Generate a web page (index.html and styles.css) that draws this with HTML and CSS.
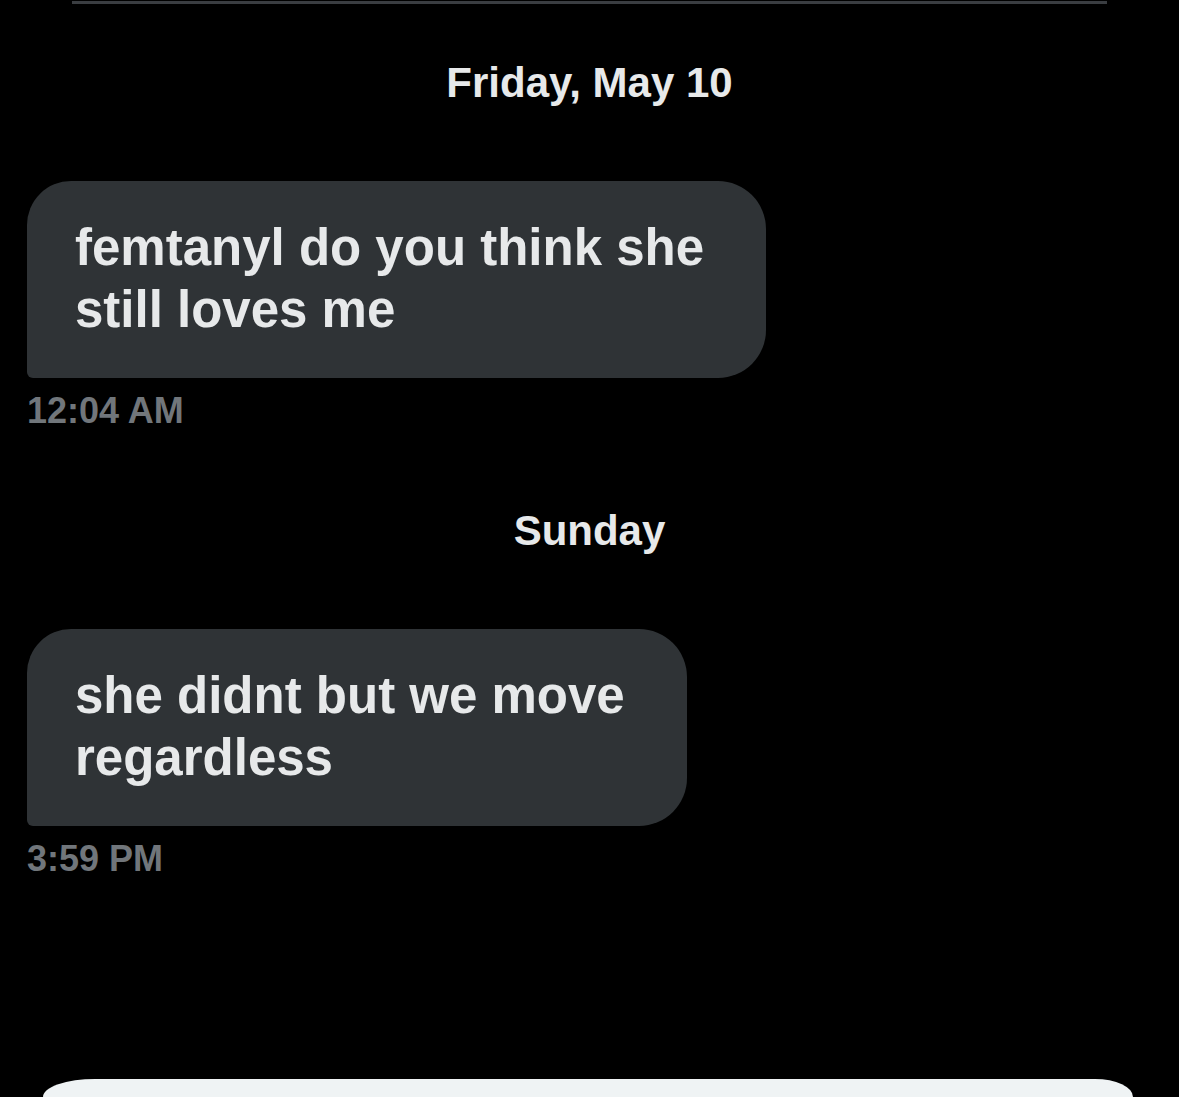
FILE: index.html
```html
<!DOCTYPE html>
<html lang="en">
<head>
    <meta charset="UTF-8">
    <meta name="viewport" content="width=device-width, initial-scale=1.0">
    <title>Messages</title>
    <link rel="stylesheet" href="styles.css">
</head>
<body>
    <div class="top-rule"></div>
    <main class="thread">
        <div class="day">Friday, May 10</div>
        <div class="message">
            <div class="bubble">femtanyl do you think she<br>still loves me</div>
            <div class="time">12:04 AM</div>
        </div>

        <div class="day">Sunday</div>
        <div class="message">
            <div class="bubble">she didnt but we move<br>regardless</div>
            <div class="time">3:59 PM</div>
        </div>
    </main>
    <div class="composer"></div>
</body>
</html>
```

FILE: styles.css
```css
*{
    margin: 0;
    padding: 0;
    box-sizing: border-box;
    font-family: 'Liberation Sans', Arial, sans-serif;
}

body {
    background-color: #000;
    width: 1179px;
    height: 1097px;
    overflow: hidden;
}

.top-rule{
    height: 3px;
    margin: 1px 72px 0 72px;
    background-color: #3a3d41;
}

.thread{
    display: flex;
    flex-direction: column;
    padding: 0 27px;
}

.day{
    align-self: center;
    margin-top: 54px;
    font-size: 42px;
    line-height: 50px;
    font-weight: bold;
    color: #e7e9ea;
}

.message + .day{
    margin-top: 73px;
}

.message{
    display: flex;
    flex-direction: column;
    align-items: flex-start;
    margin-top: 73px;
}

.bubble{
    background-color: #2f3336;
    color: #e7e9ea;
    font-size: 51px;
    line-height: 62px;
    font-weight: bold;
    padding: 36px 62px 37px 48px;
    border-radius: 44px 48px 48px 6px;
}

.time{
    margin-top: 11px;
    font-size: 36px;
    line-height: 44px;
    font-weight: bold;
    color: #71767b;
}

.composer{
    height: 18px;
    margin: 198px 46px 0 43px;
    background-color: #eff3f4;
    border-radius: 52px 38px 0 0 / 18px 18px 0 0;
}
```
